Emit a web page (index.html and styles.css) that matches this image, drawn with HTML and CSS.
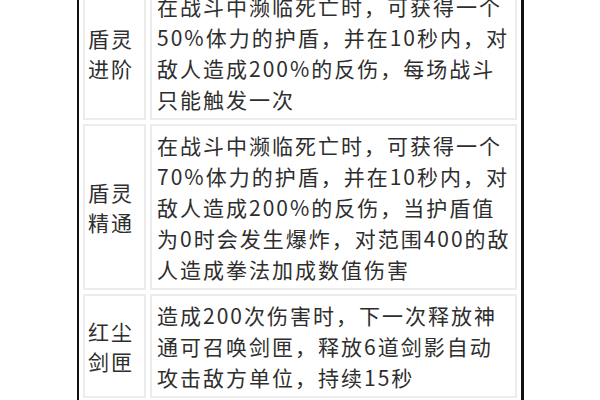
FILE: index.html
```html
<!DOCTYPE html>
<html lang="zh">
<head>
<meta charset="utf-8">
<title>技能</title>
<link rel="stylesheet" href="styles.css">
</head>
<body>
<div class="frame">
  <div class="sheet">
    <div class="cell name">盾灵<br>进阶</div>
    <div class="cell desc">在战斗中濒临死亡时，可获得一个<br>50%体力的护盾，并在10秒内，对<br>敌人造成200%的反伤，每场战斗<br>只能触发一次</div>
    <div class="cell name">盾灵<br>精通</div>
    <div class="cell desc">在战斗中濒临死亡时，可获得一个<br>70%体力的护盾，并在10秒内，对<br>敌人造成200%的反伤，当护盾值<br>为0时会发生爆炸，对范围400的敌<br>人造成拳法加成数值伤害</div>
    <div class="cell name">红尘<br>剑匣</div>
    <div class="cell desc">造成200次伤害时，下一次释放神<br>通可召唤剑匣，释放6道剑影自动<br>攻击敌方单位，持续15秒</div>
  </div>
</div>
</body>
</html>
```
FILE: styles.css
```css
html, body {
  margin: 0;
  background: #ffffff;
}

body {
  font-family: "Noto Sans CJK SC", "Noto Sans", sans-serif;
  color: #2e2e2e;
}

.frame {
  margin-left: 77px;
  width: 447px;
  height: 400px;
  box-sizing: border-box;
  border-left: 2px solid #111111;
  border-right: 3px solid #111111;
  overflow: hidden;
}

.sheet {
  display: grid;
  grid-template-columns: 63px 1fr;
  gap: 4px;
  padding: 0 4px;
  margin-top: -15px;
}

.cell {
  border: 2px solid #ececec;
  font-size: 21px;
  letter-spacing: 2px;
  white-space: nowrap;
}

.name {
  display: flex;
  align-items: center;
  padding-left: 3px;
  line-height: 30px;
}

.desc {
  padding: 4px 0 3px 5px;
  line-height: 31px;
}
```
